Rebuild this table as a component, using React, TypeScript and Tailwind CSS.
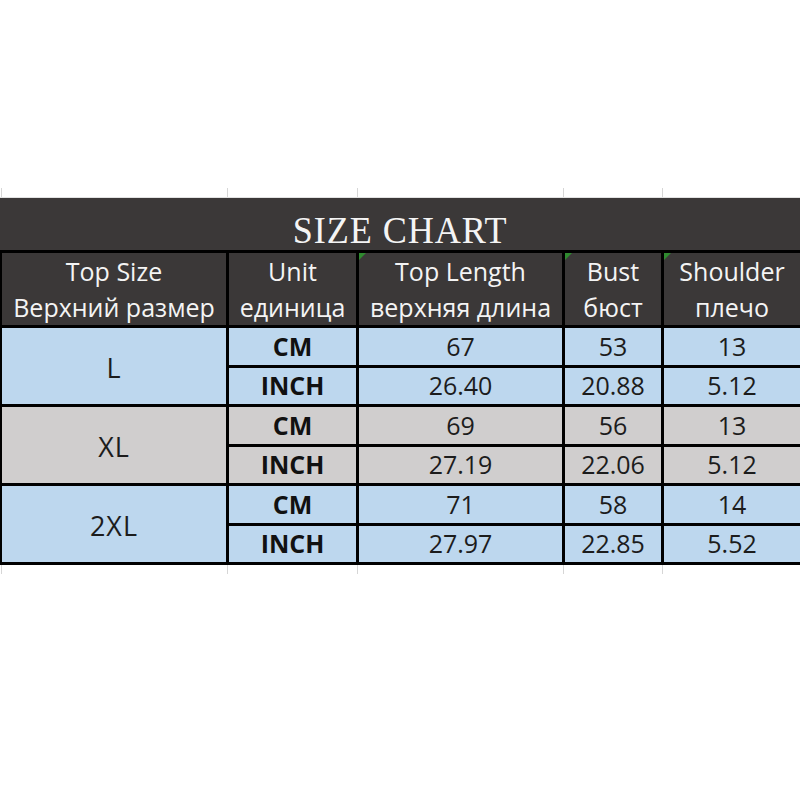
const cols = 'grid-cols-[224px_127px_203px_96px_1fr]'

const sizes = [
  {
    name: 'L',
    bg: 'bg-[#bdd7ee]',
    rows: [
      ['CM', '67', '53', '13'],
      ['INCH', '26.40', '20.88', '5.12'],
    ],
  },
  {
    name: 'XL',
    bg: 'bg-[#d0cece]',
    rows: [
      ['CM', '69', '56', '13'],
      ['INCH', '27.19', '22.06', '5.12'],
    ],
  },
  {
    name: '2XL',
    bg: 'bg-[#bdd7ee]',
    rows: [
      ['CM', '71', '58', '14'],
      ['INCH', '27.97', '22.85', '5.52'],
    ],
  },
]

const headers = [
  ['Top Size', 'Верхний размер', false],
  ['Unit', 'единица', false],
  ['Top Length', 'верхняя длина', true],
  ['Bust', 'бюст', true],
  ['Shoulder', 'плечо', true],
] as const

// faint spreadsheet gridline stubs above and below the table
function Ticks() {
  return (
    <div className={`grid ${cols} gap-x-[3px] pl-[2px] h-[9px]`}>
      <div className="border-l border-[#d6d6d6] -ml-[1px]" />
      <div className="border-l border-[#d6d6d6] -ml-[2px]" />
      <div className="border-l border-[#d6d6d6] -ml-[2px]" />
      <div className="border-l border-[#d6d6d6] -ml-[2px]" />
      <div className="border-l border-[#d6d6d6] -ml-[2px]" />
    </div>
  )
}

export default function App() {
  return (
    <div className="w-[800px] h-[800px] bg-white overflow-hidden font-['Open_Sans',sans-serif]">
      <div className="h-[188px]" />
      <Ticks />
      <div className="h-px bg-[#e2e2e2]" />

      <div
        className={`grid ${cols} grid-rows-[52px_72px_37px_36px_37px_36px_37px_36px] gap-[3px] bg-black pl-[2px] pb-[3px]`}
      >
        {/* Title row */}
        <div className="col-span-5 -ml-[2px] bg-[#3b3838] flex items-center justify-center pt-[12px]">
          <span className="font-['Liberation_Serif',serif] text-[38px] leading-none text-[#f4f4f4] tracking-[1px] scale-x-[0.95]">
            SIZE CHART
          </span>
        </div>

        {/* Header row */}
        {headers.map(([en, ru, flag]) => (
          <div
            key={en}
            className="relative bg-[#3b3838] flex flex-col items-center justify-center text-[25px] leading-[36px] text-[#f4f4f4] whitespace-nowrap"
          >
            {flag && (
              <span className="absolute left-0 top-0 w-0 h-0 border-t-[7px] border-r-[7px] border-t-[#2f8a2f] border-r-transparent" />
            )}
            <span>{en}</span>
            <span>{ru}</span>
          </div>
        ))}

        {/* Body rows */}
        {sizes.map((s) =>
          s.rows.map((r, i) => (
            <>
              {i === 0 && (
                <div
                  key={s.name}
                  className={`row-span-2 ${s.bg} flex items-center justify-center text-[27px] tracking-[1px] text-[#1c1c1c] pt-[4px]`}
                >
                  {s.name}
                </div>
              )}
              <div
                className={`${s.bg} flex items-center justify-center font-bold text-[25px] text-[#111]`}
              >
                {r[0]}
              </div>
              {r.slice(1).map((v, j) => (
                <div
                  key={j}
                  className={`${s.bg} flex items-center justify-center text-[25px] text-[#1c1c1c]`}
                >
                  {v}
                </div>
              ))}
            </>
          ))
        )}
      </div>

      <Ticks />
    </div>
  )
}
